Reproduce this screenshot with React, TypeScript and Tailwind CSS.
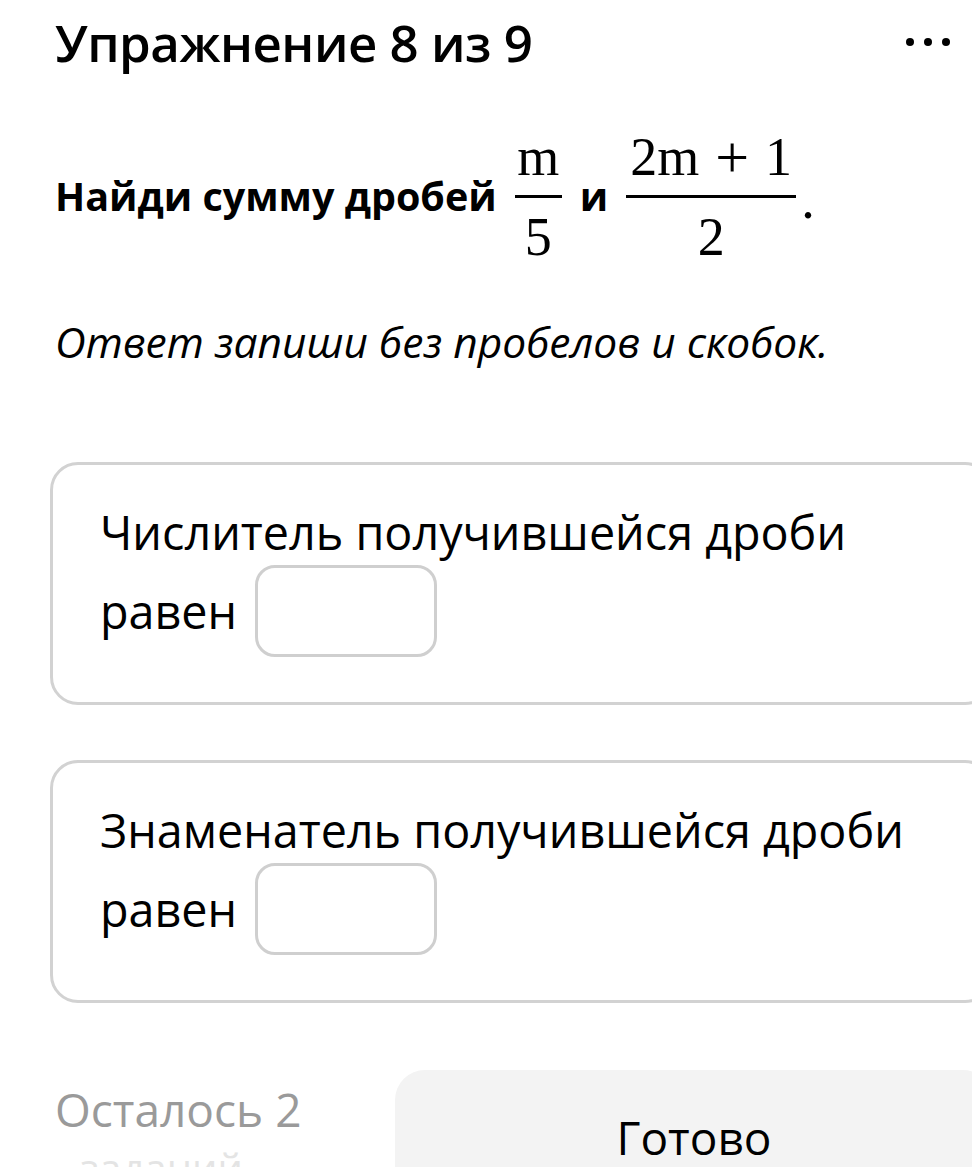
import React from "react";

const sans = "font-['Open_Sans','Noto_Sans',sans-serif]";
const serif = "font-['Liberation_Serif','DejaVu_Serif',serif]";

function Fraction({ top, bottom, width }: { top: React.ReactNode; bottom: React.ReactNode; width: string }) {
  return (
    <span className={`inline-flex flex-col items-center ${serif} text-[54px] leading-none text-black`}>
      <span className="mb-[11px] h-[54px]">{top}</span>
      <span className={`h-[3px] bg-black ${width}`} />
      <span className="mt-[12px]">{bottom}</span>
    </span>
  );
}

function AnswerCard({ label }: { label: string }) {
  return (
    <div className="w-[943px] rounded-[28px] border-[3px] border-[#d2d2d2] pl-[47px] pt-[37px] pb-[45px]">
      <p className="text-[46.7px] leading-[60px] text-black">{label}</p>
      <div className="mt-[3px] flex items-center gap-[18px]">
        <span className="text-[46.7px] leading-[60px] text-black">равен</span>
        <div className="h-[92px] w-[182px] rounded-[20px] border-[3px] border-[#cfcfcf] bg-white" />
      </div>
    </div>
  );
}

export default function App() {
  return (
    <div className={`relative h-[1167px] w-[972px] overflow-hidden bg-white ${sans} text-black`}>
      {/* Header */}
      <div className="flex items-center justify-between pl-[55px] pr-[22px] pt-[14px]">
        <h1 className="text-[51px] font-semibold leading-[56px] tracking-[-0.5px]">Упражнение 8 из 9</h1>
        <div className="flex items-center gap-[10px]">
          <span className="h-[8px] w-[8px] rounded-full bg-black" />
          <span className="h-[8px] w-[8px] rounded-full bg-black" />
          <span className="h-[8px] w-[8px] rounded-full bg-black" />
        </div>
      </div>

      {/* Question */}
      <div className="mt-[60px] flex items-center pl-[55px]">
        <span className="text-[39.5px] font-bold leading-none">Найди сумму дробей</span>
        <span className="ml-[18px]">
          <Fraction top="m" bottom="5" width="w-[47px]" />
        </span>
        <span className="mx-[18px] text-[39.5px] font-bold leading-none">и</span>
        <Fraction
          width="w-[170px]"
          top={
            <span className="flex h-[54px] items-center">
              2m<span className="mx-[16px] text-[60px] leading-[54px]">+</span>1
            </span>
          }
          bottom="2"
        />
        <span className={`${serif} ml-[5px] self-center pt-[6px] text-[54px] leading-none`}>.</span>
      </div>

      <p className="mt-[53px] pl-[55px] text-[42.5px] italic leading-[50px]">Ответ запиши без пробелов и скобок.</p>

      {/* Answer cards */}
      <div className="mt-[95px] flex flex-col gap-[55px] pl-[50px]">
        <AnswerCard label="Числитель получившейся дроби" />
        <AnswerCard label="Знаменатель получившейся дроби" />
      </div>

      {/* Footer */}
      <div className="mt-[67px] flex items-start pl-[55px]">
        <div className="flex w-[340px] shrink-0 flex-col pt-[11px]">
          <span className="text-[46px] leading-[56px] text-[#9a9a9a]">Осталось 2</span>
          <span className="mt-[6px] pl-[25px] text-[40px] leading-[50px] text-[#e4e4e4]">заданий</span>
        </div>
        <div className="flex h-[140px] w-[598px] shrink-0 items-start justify-center rounded-[30px] bg-[#f3f3f3] pt-[39px]">
          <span className="text-[46px] leading-[56px]">Готово</span>
        </div>
      </div>
    </div>
  );
}
